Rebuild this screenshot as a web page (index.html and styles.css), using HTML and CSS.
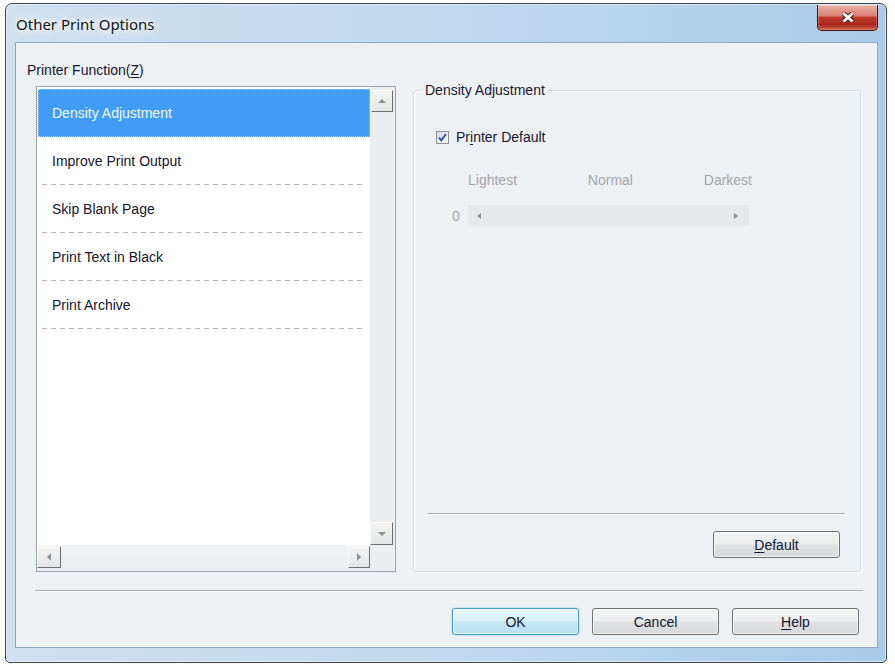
FILE: index.html
```html
<!DOCTYPE html>
<html lang="en">

<head>
    <meta charset="UTF-8" />
    <title>Other Print Options</title>
    <link rel="stylesheet" href="styles.css">
</head>

<body>
    <div class="window">
        <div class="titlebar">
            <span class="title">Other Print Options</span>
            <button class="close-btn" aria-label="Close">
                <svg width="16" height="13" viewBox="0 0 16 13">
                    <path d="M3.5 2.5 L12.5 10.5 M12.5 2.5 L3.5 10.5" stroke="#4a1512" stroke-width="5" />
                    <path d="M3.5 2.5 L12.5 10.5 M12.5 2.5 L3.5 10.5" stroke="#fff" stroke-width="3" />
                </svg>
            </button>
        </div>

        <div class="client">
            <div class="panels">
                <div class="func-col">
                    <div class="func-label">Printer Function(<u>Z</u>)</div>
                    <div class="listbox">
                        <ul class="func-list">
                            <li class="selected"><span>Density Adjustment</span></li>
                            <li><span>Improve Print Output</span></li>
                            <li><span>Skip Blank Page</span></li>
                            <li><span>Print Text in Black</span></li>
                            <li><span>Print Archive</span></li>
                        </ul>
                        <div class="vscroll">
                            <span class="sb-btn up"></span>
                            <span class="sb-btn down"></span>
                        </div>
                        <div class="hscroll">
                            <span class="sb-btn left"></span>
                            <span class="sb-btn right"></span>
                        </div>
                        <div class="sb-corner"></div>
                    </div>
                </div>

                <fieldset class="group">
                    <legend>Density Adjustment</legend>
                    <label class="check-row">
                        <span class="checkbox">
                            <svg width="11" height="11" viewBox="0 0 11 11">
                                <path d="M2 5.5 L4.3 8.3 L9 2" fill="none" stroke="#2b5cab" stroke-width="2" />
                            </svg>
                        </span>
                        <span>Pr<u>i</u>nter Default</span>
                    </label>
                    <div class="scale-labels">
                        <span>Lightest</span>
                        <span>Normal</span>
                        <span>Darkest</span>
                    </div>
                    <div class="slider-row">
                        <span class="slider-value">0</span>
                        <div class="slider">
                            <span class="arrow left"></span>
                            <span class="arrow right"></span>
                        </div>
                    </div>
                    <div class="group-footer">
                        <div class="etched"></div>
                        <button class="btn"><u>D</u>efault</button>
                    </div>
                </fieldset>
            </div>

            <div class="etched bottom-sep"></div>

            <div class="actions">
                <button class="btn default">OK</button>
                <button class="btn">Cancel</button>
                <button class="btn"><u>H</u>elp</button>
            </div>
        </div>
    </div>
</body>

</html>
```

FILE: styles.css
```css
:root {
    --text: #161630;
    --muted: #a4a6a8;
    --face: #eef1f3;
    --select: #409cf4;
    --dash: #b6b6b6;
}

* {
    box-sizing: border-box;
}

body {
    margin: 0;
    padding: 3px 0 0 5px;
    background: #fff;
    font-family: 'Liberation Sans', Arial, sans-serif;
    font-size: 14px;
    color: var(--text);
}

u {
    text-decoration-thickness: 1px;
    text-underline-offset: 2px;
}

/* window frame */
.window {
    width: 882px;
    height: 660px;
    border: 1px solid #39444f;
    border-radius: 7px 7px 5px 5px;
    background: linear-gradient(to right, #cfe0ef 0%, #c0d8ee 55%, #a9cbea 100%);
    box-shadow: inset 0 0 0 1px rgba(255, 255, 255, 0.55);
    padding: 0 8px 14px 9px;
    display: flex;
    flex-direction: column;
}

.titlebar {
    height: 38px;
    display: flex;
    align-items: flex-start;
    flex-shrink: 0;
}

.title {
    font-family: 'Noto Sans', sans-serif;
    font-size: 15px;
    line-height: 20px;
    padding: 10px 0 0 1px;
    color: #111;
    text-shadow: 0 0 8px #fff, 0 0 12px #fff, 0 0 4px #fff;
}

.close-btn {
    margin: 1px 0 0 auto;
    width: 61px;
    height: 26px;
    border: 1px solid #3e0f0b;
    border-top: none;
    border-radius: 0 0 5px 5px;
    background: linear-gradient(#eab0a6 0%, #db8276 42%, #c13a2c 50%, #a8281b 78%, #d2624a 100%);
    box-shadow: inset 0 1px 0 rgba(255, 255, 255, 0.4), inset 0 0 0 1px rgba(255, 190, 180, 0.35);
    display: flex;
    align-items: center;
    justify-content: center;
    padding: 0;
}

.client {
    flex: 1;
    border: 1px solid #8fa8bf;
    background: var(--face);
    display: flex;
    flex-direction: column;
}

.panels {
    display: flex;
    align-items: flex-start;
    padding: 19px 0 0 11px;
}

.func-label {
    line-height: 16px;
}

/* function list */
.listbox {
    margin: 8px 0 0 9px;
    width: 360px;
    height: 486px;
    border: 1px solid #9ca2a8;
    display: grid;
    grid-template-columns: 333px 25px;
    grid-template-rows: 1fr 26px;
}

.func-list {
    margin: 0;
    padding: 2px 0 0 1px;
    list-style: none;
    background: #fff;
    overflow: hidden;
}

.func-list li {
    height: 48px;
    padding: 0 4px;
    display: flex;
    align-items: center;
    background: linear-gradient(to right, var(--dash) 5px, transparent 5px) 0 100% / 9px 1px repeat-x content-box;
}

.func-list li span {
    padding-left: 10px;
}

.func-list li.selected {
    background: var(--select);
    color: #f2f8ff;
    outline: 1px dotted #a9d0f7;
    outline-offset: -1px;
}

.vscroll {
    background: #ebeef0;
    display: flex;
    flex-direction: column;
    justify-content: space-between;
    align-items: flex-start;
    padding: 3px 0 0 1px;
}

.vscroll .down {
    margin-left: -1px;
    height: 23px;
    width: 23px;
}

.hscroll {
    background: linear-gradient(#f1f3f4, #e9ecee);
    display: flex;
    justify-content: space-between;
    align-items: flex-start;
    padding-top: 1px;
}

.hscroll .left {
    width: 24px;
}

.sb-corner {
    background: #ebeef0;
}

.sb-btn {
    width: 22px;
    height: 22px;
    border: 1px solid;
    border-color: #fbfbfb #6f6f6f #6f6f6f #fbfbfb;
    background: linear-gradient(#f4f4f4, #e3e5e6);
    display: flex;
    align-items: center;
    justify-content: center;
}

.sb-btn::before {
    content: "";
    border: 4px solid transparent;
}

.sb-btn.up::before {
    border-bottom-color: #8d9093;
    border-top-width: 0;
}

.sb-btn.down::before {
    border-top-color: #8d9093;
    border-bottom-width: 0;
}

.sb-btn.left::before {
    border-right-color: #8d9093;
    border-left-width: 0;
}

.sb-btn.right::before {
    border-left-color: #8d9093;
    border-right-width: 0;
}

/* density group */
.group {
    margin: 20px 0 0 17px;
    width: 448px;
    height: 490px;
    border: 1px solid #d2dae1;
    border-radius: 3px;
    box-shadow: inset 1px 1px 0 #fff, 1px 1px 0 #fff;
    padding: 0 15px 13px 14px;
    display: flex;
    flex-direction: column;
    min-width: 0;
}

.group legend {
    margin-left: -6px;
    padding: 0 3px;
    line-height: 16px;
}

.check-row {
    margin: 31px 0 0 8px;
    display: flex;
    align-items: center;
    gap: 7px;
    line-height: 16px;
}

.checkbox {
    width: 13px;
    height: 13px;
    border: 1px solid #8c8f93;
    background: linear-gradient(135deg, #dcdedf, #fbfbfb);
    display: flex;
    align-items: center;
    justify-content: center;
}

.scale-labels {
    margin: 27px 0 0 40px;
    width: 284px;
    display: flex;
    justify-content: space-between;
    color: var(--muted);
    line-height: 16px;
}

.slider-row {
    margin: 17px 0 0 24px;
    display: flex;
    align-items: center;
    gap: 9px;
}

.slider-value {
    color: var(--muted);
    width: 7px;
}

.slider {
    width: 281px;
    height: 21px;
    background: #e5e9ec;
    display: flex;
    align-items: center;
    justify-content: space-between;
    padding: 0 11px 0 9px;
}

.arrow {
    border: 3px solid transparent;
}

.arrow.left {
    border-right: 4px solid #8a8d90;
    border-left-width: 0;
}

.arrow.right {
    border-left: 4px solid #8a8d90;
    border-right-width: 0;
}

.group-footer {
    margin-top: auto;
    display: flex;
    flex-direction: column;
}

.group-footer .btn {
    margin: 16px 5px 0 auto;
}

.etched {
    height: 2px;
    border-top: 1px solid #a9acaf;
    border-bottom: 1px solid #fbfcfc;
}

.bottom-sep {
    margin: 18px 14px 0 19px;
}

/* dialog buttons */
.actions {
    display: flex;
    justify-content: flex-end;
    gap: 13px;
    padding: 16px 18px 0 0;
}

.btn {
    width: 127px;
    height: 27px;
    border: 1px solid #707070;
    border-radius: 3px;
    background: linear-gradient(#f3f4f4 0%, #ebedee 48%, #dfe1e2 52%, #d6d8da 100%);
    box-shadow: inset 0 0 0 1px rgba(255, 255, 255, 0.7);
    font-family: 'Liberation Sans', Arial, sans-serif;
    font-size: 14px;
    color: var(--text);
    padding: 0;
}

.btn.default {
    border-color: #3f9fc8;
    background: linear-gradient(#e9f7fc 0%, #d8f0f9 48%, #c4e7f4 52%, #b8e1f1 100%);
    box-shadow: inset 0 0 0 1px rgba(255, 255, 255, 0.6), 0 0 2px rgba(64, 170, 214, 0.6);
}
```
